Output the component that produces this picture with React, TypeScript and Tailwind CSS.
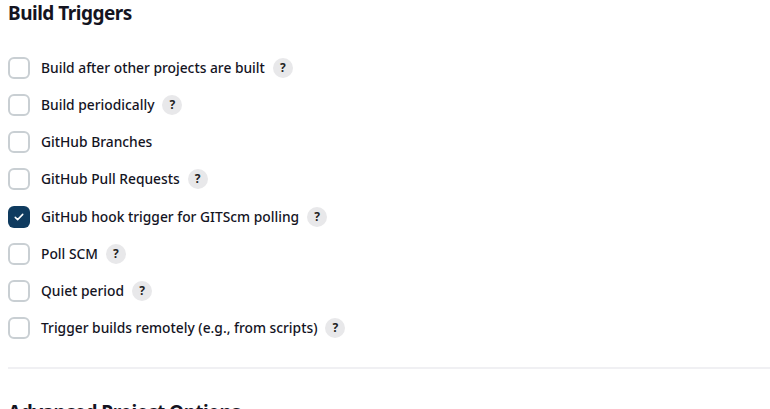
import React from "react";

const triggers = [
  { label: "Build after other projects are built", help: true, checked: false },
  { label: "Build periodically", help: true, checked: false },
  { label: "GitHub Branches", help: false, checked: false },
  { label: "GitHub Pull Requests", help: true, checked: false },
  { label: "GitHub hook trigger for GITScm polling", help: true, checked: true },
  { label: "Poll SCM", help: true, checked: false },
  { label: "Quiet period", help: true, checked: false },
  { label: "Trigger builds remotely (e.g., from scripts)", help: true, checked: false },
];

function Checkbox({ checked }: { checked: boolean }) {
  if (checked) {
    return (
      <span className="flex h-[22px] w-[22px] shrink-0 items-center justify-center rounded-[6px] bg-[#0f3b5f]">
        <svg viewBox="0 0 16 16" className="h-[12px] w-[12px]" fill="none" stroke="white" strokeWidth="2" strokeLinecap="round" strokeLinejoin="round">
          <path d="M3 8.5l3.2 3L13 4.5" />
        </svg>
      </span>
    );
  }
  return <span className="block h-[22px] w-[22px] shrink-0 rounded-[6px] border-2 border-[#c9cfd3] bg-white" />;
}

export default function App() {
  return (
    <div className="h-[409px] w-[770px] overflow-hidden bg-white pl-2 text-[#14141f]" style={{ fontFamily: '"Noto Sans", sans-serif' }}>
      <h2 className="pt-0 text-[19px] font-bold leading-[26px] tracking-[-0.5px]">Build Triggers</h2>
      <div className="mt-[31px] flex flex-col gap-[15.15px]">
        {triggers.map((t) => (
          <label key={t.label} className="flex h-[22px] items-center">
            <Checkbox checked={t.checked} />
            <span className="ml-[11px] text-[13.8px] font-medium leading-[22px]">{t.label}</span>
            {t.help && (
              <span className="ml-[8px] flex h-[20px] w-[20px] items-center justify-center rounded-full bg-[#e8e8ea] text-[12px] font-bold text-[#222]">
                ?
              </span>
            )}
          </label>
        ))}
      </div>
      <div className="mt-[28px] h-[2px] bg-[#f0f0f3]" />
      <h2 className="mt-[30px] text-[19px] font-bold leading-[26px] tracking-[-0.5px]">Advanced Project Options</h2>
    </div>
  );
}
